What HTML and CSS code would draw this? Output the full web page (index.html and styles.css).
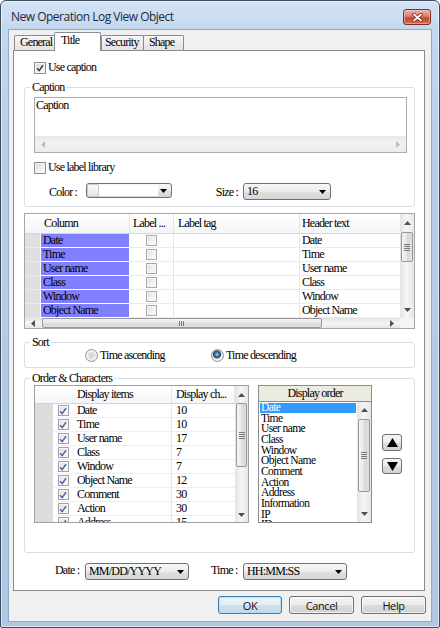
FILE: index.html
```html
<!DOCTYPE html>
<html>
<head>
<meta charset="utf-8">
<link rel="stylesheet" href="styles.css">
</head>
<body>
<div class="window">
  <div class="titlebar">
    <div class="title">New Operation Log View Object</div>
    <div class="close">
      <svg width="11" height="9" viewBox="0 0 11 9"><path d="M2 1.5L9 7.5M9 1.5L2 7.5" stroke="#6a2418" stroke-width="3.4" stroke-linecap="round"/><path d="M2 1.5L9 7.5M9 1.5L2 7.5" stroke="#fff" stroke-width="1.9" stroke-linecap="round"/></svg>
    </div>
  </div>
  <div class="client">
    <div class="tabs">
      <div class="tab t-general">General</div>
      <div class="tab active">Title</div>
      <div class="tab t-security">Security</div>
      <div class="tab t-shape">Shape</div>
    </div>
    <div class="panel">
      <div class="check-row r-usecap">
        <span class="cb"><svg width="8" height="8" viewBox="0 0 8 8"><path d="M1 4.2L3.2 6.6L7 1.2" fill="none" stroke="#3b3f4a" stroke-width="1.6"/></svg></span>
        <span>Use caption</span>
      </div>

      <div class="group g-caption">
        <div class="group-title">Caption</div>
        <div class="textbox">
          <div class="textbox-text">Caption</div>
          <div class="hscroll-tb">
            <span class="sb-btn-h"><svg width="4" height="7" viewBox="0 0 4 7"><path d="M4 0L0 3.5L4 7z" fill="#bdbdbd"/></svg></span>
            <span class="sb-fill"></span>
            <span class="sb-btn-h"><svg width="4" height="7" viewBox="0 0 4 7"><path d="M0 0L4 3.5L0 7z" fill="#bdbdbd"/></svg></span>
          </div>
        </div>
        <div class="check-row r-lib">
          <span class="cb"></span>
          <span>Use label library</span>
        </div>
        <div class="combo-row">
          <span class="lbl lbl-color">Color :</span>
          <div class="combo combo-color">
            <span class="swatch-l"></span>
            <span class="swatch"></span>
            <span class="combo-arrow"><svg width="7" height="4" viewBox="0 0 7 4"><path d="M0 0H7L3.5 4z" fill="#000"/></svg></span>
          </div>
          <span class="lbl lbl-size">Size :</span>
          <div class="combo combo-size">
            <span class="combo-text">16</span>
            <span class="combo-arrow"><svg width="7" height="4" viewBox="0 0 7 4"><path d="M0 0H7L3.5 4z" fill="#000"/></svg></span>
          </div>
        </div>
      </div>

      <div class="grid1">
        <div class="grid1-top">
          <div class="grid1-main">
            <div class="gh gh0"></div><div class="gh">Column</div><div class="gh">Label ...</div><div class="gh">Label tag</div><div class="gh gh-last">Header text</div>

            <div class="rh"></div><div class="pc">Date</div><div class="cc"><span class="cb sm"></span></div><div class="tc"></div><div class="tc tl">Date</div>
            <div class="rh"></div><div class="pc">Time</div><div class="cc"><span class="cb sm"></span></div><div class="tc"></div><div class="tc tl">Time</div>
            <div class="rh"></div><div class="pc">User name</div><div class="cc"><span class="cb sm"></span></div><div class="tc"></div><div class="tc tl">User name</div>
            <div class="rh"></div><div class="pc">Class</div><div class="cc"><span class="cb sm"></span></div><div class="tc"></div><div class="tc tl">Class</div>
            <div class="rh"></div><div class="pc">Window</div><div class="cc"><span class="cb sm"></span></div><div class="tc"></div><div class="tc tl">Window</div>
            <div class="rh"></div><div class="pc">Object Name</div><div class="cc"><span class="cb sm"></span></div><div class="tc"></div><div class="tc tl">Object Name</div>
          </div>
          <div class="vscroll vs-grid1">
            <span class="sb-btn up"><svg width="7" height="4" viewBox="0 0 7 4"><path d="M0 4L3.5 0L7 4z" fill="#4f4f4f"/></svg></span>
            <span class="thumb-v"><svg width="6" height="7" viewBox="0 0 6 7"><path d="M0 .5H6M0 2.5H6M0 4.5H6M0 6.5H6" stroke="#7a7a7a"/></svg></span>
            <span class="sb-fill"></span>
            <span class="sb-btn down"><svg width="7" height="4" viewBox="0 0 7 4"><path d="M0 0H7L3.5 4z" fill="#4f4f4f"/></svg></span>
          </div>
        </div>
        <div class="hscroll-g">
          <span class="sb-btn-h w16"><svg width="4" height="7" viewBox="0 0 4 7"><path d="M4 0L0 3.5L4 7z" fill="#4f4f4f"/></svg></span>
          <span class="thumb-h"><svg width="6" height="5" viewBox="0 0 6 5"><path d="M.5 0V5M2.5 0V5M4.5 0V5" stroke="#7a7a7a"/></svg></span>
          <span class="sb-fill"></span>
          <span class="sb-btn-h w16"><svg width="4" height="7" viewBox="0 0 4 7"><path d="M0 0L4 3.5L0 7z" fill="#4f4f4f"/></svg></span>
          <span class="corner"></span>
        </div>
      </div>

      <div class="group g-sort">
        <div class="group-title">Sort</div>
        <div class="radio-row">
          <label class="radio-item ri1"><span class="radio"></span><span>Time ascending</span></label>
          <label class="radio-item"><span class="radio on"></span><span>Time descending</span></label>
        </div>
      </div>

      <div class="group g-order">
        <div class="group-title">Order &amp; Characters</div>
        <div class="order-row">
          <div class="list1">
            <div class="list1-main">
              <div class="lh lh0"></div><div class="lh lh0"></div><div class="lh">Display items</div><div class="lh">Display ch...</div>

              <div class="lrh"></div><div class="lcc"><span class="cb sm on"><svg width="8" height="8" viewBox="0 0 8 8"><path d="M1 4.2L3.2 6.6L7 1.2" fill="none" stroke="#5866ad" stroke-width="1.6"/></svg></span></div><div class="lc">Date</div><div class="lc lv">10</div>
              <div class="lrh"></div><div class="lcc"><span class="cb sm on"><svg width="8" height="8" viewBox="0 0 8 8"><path d="M1 4.2L3.2 6.6L7 1.2" fill="none" stroke="#5866ad" stroke-width="1.6"/></svg></span></div><div class="lc">Time</div><div class="lc lv">10</div>
              <div class="lrh"></div><div class="lcc"><span class="cb sm on"><svg width="8" height="8" viewBox="0 0 8 8"><path d="M1 4.2L3.2 6.6L7 1.2" fill="none" stroke="#5866ad" stroke-width="1.6"/></svg></span></div><div class="lc">User name</div><div class="lc lv">17</div>
              <div class="lrh"></div><div class="lcc"><span class="cb sm on"><svg width="8" height="8" viewBox="0 0 8 8"><path d="M1 4.2L3.2 6.6L7 1.2" fill="none" stroke="#5866ad" stroke-width="1.6"/></svg></span></div><div class="lc">Class</div><div class="lc lv">7</div>
              <div class="lrh"></div><div class="lcc"><span class="cb sm on"><svg width="8" height="8" viewBox="0 0 8 8"><path d="M1 4.2L3.2 6.6L7 1.2" fill="none" stroke="#5866ad" stroke-width="1.6"/></svg></span></div><div class="lc">Window</div><div class="lc lv">7</div>
              <div class="lrh"></div><div class="lcc"><span class="cb sm on"><svg width="8" height="8" viewBox="0 0 8 8"><path d="M1 4.2L3.2 6.6L7 1.2" fill="none" stroke="#5866ad" stroke-width="1.6"/></svg></span></div><div class="lc">Object Name</div><div class="lc lv">12</div>
              <div class="lrh"></div><div class="lcc"><span class="cb sm on"><svg width="8" height="8" viewBox="0 0 8 8"><path d="M1 4.2L3.2 6.6L7 1.2" fill="none" stroke="#5866ad" stroke-width="1.6"/></svg></span></div><div class="lc">Comment</div><div class="lc lv">30</div>
              <div class="lrh"></div><div class="lcc"><span class="cb sm on"><svg width="8" height="8" viewBox="0 0 8 8"><path d="M1 4.2L3.2 6.6L7 1.2" fill="none" stroke="#5866ad" stroke-width="1.6"/></svg></span></div><div class="lc">Action</div><div class="lc lv">30</div>
              <div class="lrh"></div><div class="lcc"><span class="cb sm on"><svg width="8" height="8" viewBox="0 0 8 8"><path d="M1 4.2L3.2 6.6L7 1.2" fill="none" stroke="#5866ad" stroke-width="1.6"/></svg></span></div><div class="lc">Address</div><div class="lc lv">15</div>
            </div>
            <div class="vscroll vs-list1">
              <span class="sb-btn up"><svg width="7" height="4" viewBox="0 0 7 4"><path d="M0 4L3.5 0L7 4z" fill="#4f4f4f"/></svg></span>
              <span class="thumb-v"><svg width="6" height="7" viewBox="0 0 6 7"><path d="M0 .5H6M0 2.5H6M0 4.5H6M0 6.5H6" stroke="#7a7a7a"/></svg></span>
              <span class="sb-fill"></span>
              <span class="sb-btn down"><svg width="7" height="4" viewBox="0 0 7 4"><path d="M0 0H7L3.5 4z" fill="#4f4f4f"/></svg></span>
            </div>
          </div>

          <div class="order-col">
            <div class="order-head">Display order</div>
            <div class="order-list">
              <div class="order-items">
                <div class="li sel">Date</div>
                <div class="li">Time</div>
                <div class="li">User name</div>
                <div class="li">Class</div>
                <div class="li">Window</div>
                <div class="li">Object Name</div>
                <div class="li">Comment</div>
                <div class="li">Action</div>
                <div class="li">Address</div>
                <div class="li">Information</div>
                <div class="li">IP</div>
                <div class="li">ID</div>
              </div>
              <div class="vscroll vs-order">
                <span class="sb-btn up"><svg width="7" height="4" viewBox="0 0 7 4"><path d="M0 4L3.5 0L7 4z" fill="#4f4f4f"/></svg></span>
                <span class="thumb-v"><svg width="6" height="7" viewBox="0 0 6 7"><path d="M0 .5H6M0 2.5H6M0 4.5H6M0 6.5H6" stroke="#7a7a7a"/></svg></span>
                <span class="sb-fill"></span>
                <span class="sb-btn down"><svg width="7" height="4" viewBox="0 0 7 4"><path d="M0 0H7L3.5 4z" fill="#4f4f4f"/></svg></span>
              </div>
            </div>
          </div>

          <div class="ud">
            <div class="ud-btn ud-up"><svg width="11" height="9" viewBox="0 0 11 9"><path d="M5.5 0L11 9H0z" fill="#000"/></svg></div>
            <div class="ud-btn ud-down"><svg width="11" height="9" viewBox="0 0 11 9"><path d="M0 0H11L5.5 9z" fill="#000"/></svg></div>
          </div>
        </div>
      </div>

      <div class="dt-row">
        <span class="lbl lbl-date">Date :</span>
        <div class="combo combo-date">
          <span class="combo-text">MM/DD/YYYY</span>
          <span class="combo-arrow"><svg width="7" height="4" viewBox="0 0 7 4"><path d="M0 0H7L3.5 4z" fill="#000"/></svg></span>
        </div>
        <span class="lbl lbl-time">Time :</span>
        <div class="combo combo-time">
          <span class="combo-text">HH:MM:SS</span>
          <span class="combo-arrow"><svg width="7" height="4" viewBox="0 0 7 4"><path d="M0 0H7L3.5 4z" fill="#000"/></svg></span>
        </div>
      </div>
    </div>

    <div class="buttons">
      <div class="btn default">OK</div>
      <div class="btn">Cancel</div>
      <div class="btn">Help</div>
    </div>
  </div>
</div>
</body>
</html>
```

FILE: styles.css
```css
* { box-sizing: border-box; }
html, body { margin: 0; padding: 0; }
body {
  width: 440px; height: 628px; overflow: hidden; background: #fff;
  font-family: "Liberation Serif", "Times New Roman", serif;
  font-size: 12px; letter-spacing: -0.8px; color: #000;
}

.window {
  width: 440px; height: 628px;
  border: 1px solid #3f4c5c; border-radius: 6px 6px 2px 2px;
  background: linear-gradient(180deg, #d4e4f6 0px, #c3d8ef 28px, #b7cee9 160px, #adc7e5 100%);
  padding: 0 8px 6px 8px;
  display: flex; flex-direction: column;
  box-shadow: inset 0 0 0 1px rgba(255,255,255,0.55);
}

.titlebar { height: 29px; flex: none; display: flex; align-items: flex-start; }
.title {
  font-family: "Open Sans", "Noto Sans", sans-serif;
  font-size: 12px; letter-spacing: -0.5px; line-height: 15px;
  margin: 8px 0 0 2px; color: #1e2b3c;
}
.close {
  margin-left: auto; margin-top: 8px;
  width: 28px; height: 16px;
  border: 1px solid #7a2e24; border-radius: 3px;
  background: linear-gradient(180deg, #eab0a2 0%, #d9806f 45%, #c44a33 55%, #d26a52 100%);
  box-shadow: inset 0 0 0 1px rgba(255,220,210,0.45);
  display: flex; align-items: center; justify-content: center;
}

.client {
  height: 591px; flex: none; background: #f0f0f0;
  display: flex; flex-direction: column;
  box-shadow: 0 0 0 1px #93aac6;
}

.tabs { height: 21px; flex: none; display: flex; align-items: flex-end; padding-left: 5px; }
.tab {
  height: 15px; margin-bottom: 1px;
  border: 1px solid #898c95; border-bottom: none; border-radius: 2px 2px 0 0;
  background: linear-gradient(180deg, #f7f7f7, #e2e2e2);
  line-height: 13px; white-space: nowrap;
}
.t-general { width: 41px; padding-left: 5px; }
.tab.active {
  height: 19px; margin-bottom: 0; margin-left: -1px; width: 47px;
  background: #fff; padding-left: 6px; line-height: 15px;
  position: relative; z-index: 2;
}
.t-security { width: 43px; padding-left: 3px; }
.t-shape { width: 41px; margin-left: -1px; padding-left: 5px; }

.panel {
  margin: -1px 0 0 4px; width: 412px; height: 541px; flex: none;
  background: #fff; border: 1px solid #898c95;
  padding: 0 9px 0 10px;
  display: flex; flex-direction: column; overflow: hidden;
}

.check-row { display: flex; align-items: center; gap: 2px; height: 13px; line-height: 13px; }
.r-usecap { margin-top: 10px; padding-left: 10px; }
.r-lib { margin-top: 8px; padding-left: 9px; }

.cb {
  width: 12px; height: 12px; flex: none;
  border: 1px solid #8e8f8f;
  background: linear-gradient(135deg, #d8d8d8 0%, #f0f0f0 60%, #fbfbfb 100%);
  box-shadow: inset 0 0 0 1px #f6f6f6;
  display: flex; align-items: center; justify-content: center;
}
.cb.sm {
  width: 11px; height: 11px; border-color: #a9a9a9;
  background: linear-gradient(135deg, #dedede 0%, #f3f3f3 60%, #fdfdfd 100%);
}

.group { border: 1px solid #d5dfe5; border-radius: 3px; flex: none; }
.group-title {
  margin: -8px 0 0 5px; padding: 0 2px; background: #fff;
  width: max-content; height: 14px; line-height: 14px;
}
.g-caption { margin-top: 13px; }

.textbox {
  margin: 3px 7px 0 9px; height: 56px;
  border: 1px solid #abadb3;
  display: flex; flex-direction: column;
}
.textbox-text { flex: 1; padding: 0 1px; line-height: 14px; }
.hscroll-tb {
  height: 16px; display: flex; align-items: stretch;
  background: linear-gradient(180deg, #e9e9e9, #f2f2f2 50%, #ebebeb);
}
.sb-btn-h { width: 16px; display: flex; align-items: center; justify-content: center; flex: none; }
.sb-fill { flex: 1; }

.combo-row { margin: 9px 0 6px 0; height: 17px; display: flex; align-items: center; padding-left: 24px; }
.lbl { line-height: 14px; white-space: nowrap; flex: none; }
.lbl-color { width: 37px; }
.lbl-size { width: 71px; text-align: right; padding-right: 5px; }

.combo {
  height: 17px; flex: none;
  border: 1px solid #707070; border-radius: 3px;
  background: linear-gradient(180deg, #f7f7f7 0%, #ececec 50%, #e0e0e0 51%, #d6d6d6 100%);
  display: flex; align-items: center;
}
.combo-text { flex: 1; padding-left: 3px; line-height: 15px; white-space: nowrap; }
.combo-arrow { margin-left: auto; margin-right: 4px; display: flex; }
.combo-color { width: 86px; height: 15px; align-self: flex-start; margin-top: 0; }
.swatch-l {
  width: 12px; height: 13px; flex: none;
  background: linear-gradient(180deg, #fbfbfb, #e4e4e4);
  border: 1px solid #cacaca; border-radius: 2px;
}
.swatch { width: 59px; height: 11px; background: #fff; flex: none; }
.combo-size { width: 88px; }

.grid1 {
  margin-top: 6px; height: 116px; flex: none;
  border: 1px solid #a6a6a6;
  display: flex; flex-direction: column;
}
.grid1-top { display: flex; height: 104px; }
.grid1-main {
  width: 375px;
  display: grid;
  grid-template-columns: 15px 90px 44px 126px 100px;
  grid-template-rows: 20px repeat(6, 14px);
}
.gh {
  background: linear-gradient(180deg, #ffffff, #f4f5f7);
  border-bottom: 1px solid #d5d5d5; border-right: 1px solid #e6e6e6;
  line-height: 19px; padding-left: 3px; white-space: nowrap; overflow: hidden;
}
.gh0 { border-right: none; }
.gh:nth-child(2) { padding-left: 4px; }
.gh:nth-child(4) { padding-left: 4px; }
.gh-last { padding-left: 2px; border-right: none; }
.rh { background: #dfdfdf; border-bottom: 1px solid #e9e9e9; }
.pc {
  background: #8080ff; border-left: 1px solid #fff; border-right: 1px solid #fff; border-bottom: 1px solid #fff;
  line-height: 13px; padding-left: 2px; white-space: nowrap; overflow: hidden;
}
.cc { border-bottom: 1px solid #ececec; border-right: 1px solid #e6e6e6; display: flex; align-items: center; justify-content: center; }
.tc { border-bottom: 1px solid #ececec; border-right: 1px solid #e6e6e6; line-height: 13px; white-space: nowrap; overflow: hidden; }
.tl { padding-left: 2px; border-right: none; }

.vscroll {
  width: 14px; flex: none; display: flex; flex-direction: column;
  background: linear-gradient(90deg, #e3e3e3, #f4f4f4 45%, #f4f4f4 55%, #e6e6e6);
}
.sb-btn { display: flex; align-items: center; justify-content: center; flex: none; }
.thumb-v {
  flex: none; margin: 0 1px;
  border: 1px solid #979797; border-radius: 2px;
  background: linear-gradient(90deg, #f5f5f5, #e7e7e7 50%, #d8d8d8 51%, #e0e0e0);
  display: flex; align-items: center; justify-content: center;
}
.vs-grid1 .up { height: 17px; }
.vs-grid1 .thumb-v { margin-top: 1px; height: 30px; }
.vs-grid1 .down { height: 17px; }

.hscroll-g {
  height: 10px; display: flex;
  background: linear-gradient(180deg, #e3e3e3, #f4f4f4 45%, #f4f4f4 55%, #e6e6e6);
}
.w16 { width: 16px; }
.thumb-h {
  flex: none; width: 280px; margin-left: 1px;
  border: 1px solid #979797; border-radius: 2px;
  background: linear-gradient(180deg, #f5f5f5, #e7e7e7 50%, #d8d8d8 51%, #e0e0e0);
  display: flex; align-items: center; justify-content: center;
}
.corner { width: 14px; flex: none; background: #f5f5f5; }

.g-sort { margin-top: 13px; }
.radio-row { height: 13px; margin-bottom: 5px; padding-left: 60px; display: flex; align-items: center; }
.radio-item { display: flex; align-items: center; gap: 2px; line-height: 13px; white-space: nowrap; }
.ri1 { width: 126px; }
.radio {
  width: 13px; height: 13px; flex: none; border-radius: 50%;
  border: 1px solid #8e8f8f;
  background: radial-gradient(circle at 50% 50%, #cfcfcf 0, #dedede 2.5px, #ececec 4px, #f7f7f7 5.5px);
}
.radio.on {
  background: radial-gradient(circle at 45% 40%, #a9d6f0 0, #3f7faa 2px, #1c4465 3.6px, #cfd6dc 4.3px, #f5f5f5 5.5px);
}

.g-order { margin-top: 10px; }
.order-row { display: flex; height: 138px; margin: 0 0 29px 9px; }

.list1 {
  width: 215px; height: 138px; flex: none;
  border: 1px solid #a0a0a0; display: flex; overflow: hidden;
}
.list1-main {
  width: 200px; height: 136px; overflow: hidden;
  display: grid;
  grid-template-columns: 18px 20px 99px 63px;
  grid-template-rows: 18px repeat(9, 14px);
}
.lh {
  background: linear-gradient(180deg, #ffffff, #f4f5f7);
  border-bottom: 1px solid #d5d5d5; border-right: 1px solid #e6e6e6;
  line-height: 17px; padding-left: 4px; white-space: nowrap; overflow: hidden;
}
.lh0 { border-right: none; }
.lrh { background: #dcdcdc; }
.lcc { display: flex; align-items: center; justify-content: center; border-bottom: 1px solid #f0f0f0; }
.cb.sm.on { border-color: #a3a3a3; }
.lc {
  line-height: 13px; padding-left: 4px; white-space: nowrap; overflow: hidden;
  border-bottom: 1px solid #eeeeee; border-right: 1px solid #e6e6e6;
}
.lv { border-right: none; }
.vs-list1 { width: 13px; }
.vs-list1 .up { height: 17px; }
.vs-list1 .thumb-v { height: 64px; }
.vs-list1 .down { height: 15px; }

.order-col { width: 114px; margin-left: 9px; flex: none; display: flex; flex-direction: column; }
.order-head {
  height: 17px; border: 1px solid #8c8c8c;
  background: #ecebe0; text-align: center; line-height: 15px;
}
.order-list {
  height: 121px; border: 1px solid #8c8c8c; border-top: none;
  display: flex; overflow: hidden;
}
.order-items { flex: 1; overflow: hidden; font-size: 11.5px; letter-spacing: -0.6px; }
.li { height: 10.67px; line-height: 10.67px; padding-left: 2px; white-space: nowrap; }
.li.sel {
  background: #3399ff; color: #fff;
  margin: 1px 1px 0 1px; height: 9.67px; line-height: 9.67px; padding-left: 1px;
}
.vs-order .up { height: 16px; }
.vs-order .thumb-v { margin-top: 1px; height: 73px; }
.vs-order .down { height: 16px; }

.ud { margin: 49px 0 0 10px; display: flex; flex-direction: column; gap: 7px; flex: none; }
.ud-btn {
  width: 20px; border: 1px solid #707070; border-radius: 3px;
  background: linear-gradient(180deg, #f4f4f4 0%, #ececec 50%, #dedede 51%, #d2d2d2 100%);
  display: flex; align-items: center; justify-content: center;
}
.ud-up { height: 17px; }
.ud-down { height: 16px; }

.dt-row { margin-top: 10px; height: 17px; display: flex; align-items: flex-start; padding-left: 31px; flex: none; }
.lbl-date { width: 30px; }
.lbl-time { margin-left: 22px; width: 32px; }
.combo-date { width: 104px; }
.combo-time { width: 104px; }

.buttons {
  margin-top: 5px; height: 18px; flex: none;
  display: flex; justify-content: flex-end; gap: 7px; padding-right: 5px;
}
.btn {
  width: 65px; height: 18px;
  border: 1px solid #707070; border-radius: 3px;
  background: linear-gradient(180deg, #f3f3f3 0%, #ebebeb 50%, #dddddd 51%, #d0d0d0 100%);
  box-shadow: inset 0 0 0 1px rgba(255,255,255,0.7);
  font-family: "Open Sans", "Noto Sans", sans-serif; font-size: 11px; letter-spacing: -0.4px;
  display: flex; align-items: center; justify-content: center; color: #111;
}
.btn.default {
  width: 64px; border-color: #3c7fb1;
  background: linear-gradient(180deg, #eef5fa 0%, #e2edf5 50%, #d2e1ec 51%, #c6d8e6 100%);
  box-shadow: inset 0 0 0 1px rgba(170,220,245,0.8);
}
```
